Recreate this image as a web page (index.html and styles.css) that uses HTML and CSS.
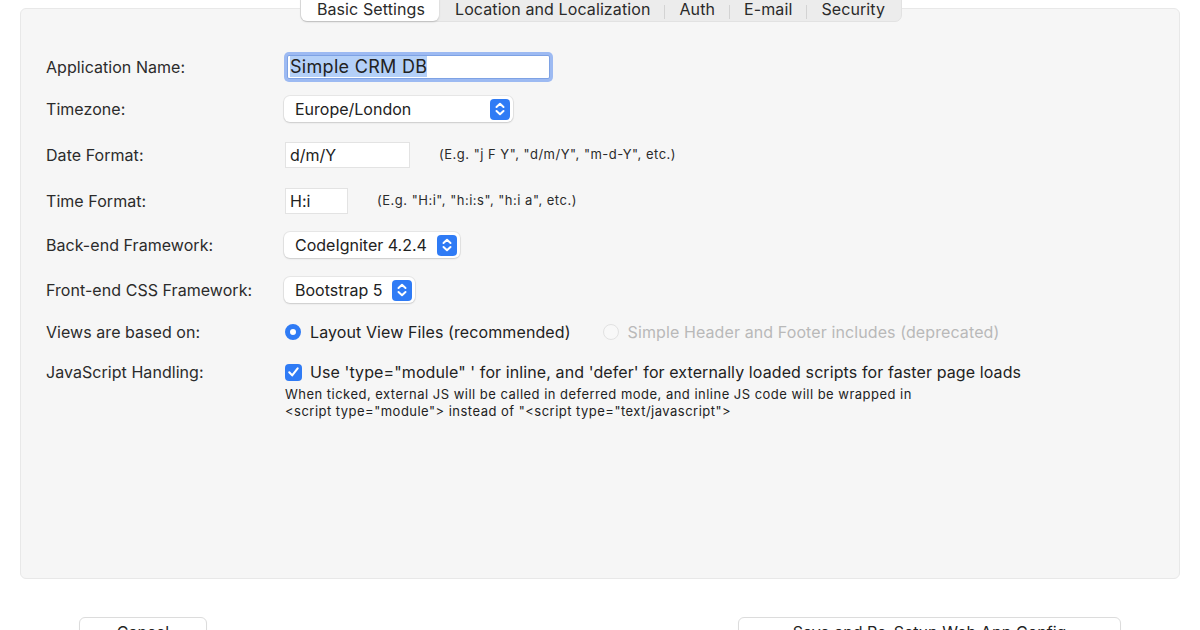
FILE: index.html
```html
<!DOCTYPE html>
<html>
<head>
<meta charset="utf-8">
<link rel="stylesheet" href="styles.css">
</head>
<body>
<div class="panel">
  <div class="tabs-wrap">
    <div class="tabs">
      <div class="tab active">Basic Settings</div>
      <div class="tab first">Location and Localization</div>
      <div class="sep"></div>
      <div class="tab">Auth</div>
      <div class="sep"></div>
      <div class="tab">E-mail</div>
      <div class="sep"></div>
      <div class="tab last">Security</div>
    </div>
  </div>
  <div class="form">
    <div class="row r1">
      <div class="label">Application Name:</div>
      <div class="ctrl"><div class="input focus w-name"><span class="sel">Simple CRM DB</span></div></div>
    </div>
    <div class="row r2">
      <div class="label">Timezone:</div>
      <div class="ctrl"><div class="select w-tz"><span class="val">Europe/London</span><span class="step"><svg viewBox="0 0 20 20" width="20" height="20"><path d="M6.5 8 L10 4.8 L13.5 8 M6.5 12 L10 15.2 L13.5 12" fill="none" stroke="#fff" stroke-width="2" stroke-linecap="round" stroke-linejoin="round"/></svg></span></div></div>
    </div>
    <div class="row r3">
      <div class="label">Date Format:</div>
      <div class="ctrl"><div class="input w-date">d/m/Y</div><span class="hint hint-date">(E.g. "j F Y", "d/m/Y", "m-d-Y", etc.)</span></div>
    </div>
    <div class="row r4">
      <div class="label">Time Format:</div>
      <div class="ctrl"><div class="input w-time">H:i</div><span class="hint hint-time">(E.g. "H:i", "h:i:s", "h:i a", etc.)</span></div>
    </div>
    <div class="row r5">
      <div class="label">Back-end Framework:</div>
      <div class="ctrl"><div class="select"><span class="val">CodeIgniter 4.2.4</span><span class="step"><svg viewBox="0 0 20 20" width="20" height="20"><path d="M6.5 8 L10 4.8 L13.5 8 M6.5 12 L10 15.2 L13.5 12" fill="none" stroke="#fff" stroke-width="2" stroke-linecap="round" stroke-linejoin="round"/></svg></span></div></div>
    </div>
    <div class="row r6">
      <div class="label">Front-end CSS Framework:</div>
      <div class="ctrl"><div class="select"><span class="val">Bootstrap 5</span><span class="step"><svg viewBox="0 0 20 20" width="20" height="20"><path d="M6.5 8 L10 4.8 L13.5 8 M6.5 12 L10 15.2 L13.5 12" fill="none" stroke="#fff" stroke-width="2" stroke-linecap="round" stroke-linejoin="round"/></svg></span></div></div>
    </div>
    <div class="row r7">
      <div class="label">Views are based on:</div>
      <div class="ctrl">
        <span class="radio on"></span><span class="opt">Layout View Files (recommended)</span>
        <span class="radio off"></span><span class="opt dis">Simple Header and Footer includes (deprecated)</span>
      </div>
    </div>
    <div class="row r8">
      <div class="label">JavaScript Handling:</div>
      <div class="ctrl col">
        <div class="chkline"><span class="check"><svg viewBox="0 0 18 18" width="18" height="18"><path d="M4.5 9.3 L7.6 12.6 L13.4 5.2" fill="none" stroke="#fff" stroke-width="2.2" stroke-linecap="round" stroke-linejoin="round"/></svg></span><span class="opt">Use 'type="module" ' for inline, and 'defer' for externally loaded scripts for faster page loads</span></div>
        <div class="desc">When ticked, external JS will be called in deferred mode, and inline JS code will be wrapped in<br>&lt;script type="module"&gt; instead of "&lt;script type="text/javascript"&gt;</div>
      </div>
    </div>
  </div>
</div>
<div class="footer">
  <div class="btn btn-cancel">Cancel</div>
  <div class="btn btn-save">Save and Re-Setup Web App Config</div>
</div>
</body>
</html>
```
FILE: styles.css
```css
html, body {
  margin: 0;
  padding: 0;
  overflow: hidden;
  background: #ffffff;
  font-family: Inter, "Liberation Sans", Arial, sans-serif;
  color: #262626;
}
.panel {
  margin: 8px 20px 0 20px;
  background: #f6f6f6;
  border: 1px solid #e8e8e8;
  border-radius: 6px;
  box-sizing: border-box;
  height: 571px;
}
.tabs-wrap {
  display: flex;
  justify-content: center;
  margin-top: -16px;
}
.tabs {
  display: flex;
  align-items: center;
  background: #ececec;
  border: 1px solid #e2e2e2;
  border-radius: 7px;
  height: 29px;
  box-sizing: border-box;
  padding: 0;
  margin-left: 2px;
}
.tab {
  font-size: 16px;
  letter-spacing: 0.1px;
  color: #2a2a2a;
  padding: 4px 14px 0 14px;
  height: 27px;
  box-sizing: border-box;
  line-height: 22px;
}
.tab.first { padding-left: 14px; }
.tab.last { padding-right: 16px; }
.tab.active {
  background: #ffffff;
  border-radius: 6px;
  box-shadow: 0 1px 2px rgba(0,0,0,0.18);
  padding: 4px 14px 0 16px;
  margin-right: 2px;
}
.sep {
  width: 1px;
  height: 14px;
  margin-top: 8px;
  background: #d3d3d3;
}
.form {
  display: flex;
  flex-direction: column;
  padding: 30px 0 0 25px;
}
.row {
  display: flex;
  align-items: center;
  height: 30px;
}
.r2 { margin-top: 12px; }
.r3 { margin-top: 16px; }
.r4 { margin-top: 16px; }
.r5 { margin-top: 14px; }
.r6 { margin-top: 15px; }
.r7 { margin-top: 12px; }
.r8 { margin-top: 10px; align-items: flex-start; height: auto; }
.label {
  width: 238px;
  flex: none;
  font-size: 16px;
  color: #2b2b2b;
  letter-spacing: 0.05px;
}
.r8 .label { padding-top: 5px; }
.ctrl {
  display: flex;
  align-items: center;
}
.ctrl.col {
  flex-direction: column;
  align-items: flex-start;
}
.input {
  background: #fff;
  border: 1px solid #e3e3e3;
  box-sizing: border-box;
  height: 26px;
  font-size: 16px;
  line-height: 24px;
  padding: 0 4px;
  color: #222;
  margin-left: 1px;
}
.input.focus {
  border: 1px solid #7ea2e4;
  box-shadow: 0 0 0 3px #9dbaf2;
  border-radius: 2px;
  height: 24px;
  margin-left: 3px;
  padding: 0 2px;
  line-height: 22px;
  font-size: 18px;
  letter-spacing: 0.3px;
}
.sel {
  background: #b4d0f8;
}
.w-name { width: 263px; }
.w-date { width: 125px; }
.w-time { width: 63px; }
.hint {
  font-size: 13px;
  color: #2b2b2b;
  margin-top: -2px;
  letter-spacing: 0.5px;
}
.hint-date { margin-left: 29px; }
.hint-time { margin-left: 29px; }
.select {
  display: flex;
  align-items: center;
  background: #fff;
  border-radius: 6px;
  box-shadow: 0 0 0 1px rgba(0,0,0,0.06), 0 1px 2px rgba(0,0,0,0.12);
  height: 26px;
  padding: 0 3px 0 11px;
  font-size: 16px;
  color: #222;
}
.select .val { margin-right: 10px; }
.w-tz { width: 215px; justify-content: space-between; }
.step {
  display: flex;
  align-items: center;
  justify-content: center;
  width: 20px;
  height: 21px;
  background: #2f7bf5;
  border-radius: 4px;
}
.radio {
  width: 16px;
  height: 16px;
  border-radius: 50%;
  box-sizing: border-box;
  flex: none;
}
.radio.on {
  border: 5px solid #2f7bf5;
  margin-left: 1px;
  background: #fff;
}
.radio.off {
  border: 1px solid #e2e2e2;
  background: #f8f8f8;
  margin-left: 32px;
}
.opt {
  font-size: 16px;
  color: #222;
  margin-left: 9px;
  letter-spacing: 0.1px;
}
.opt.dis {
  color: #b9b9b9;
}
.chkline {
  display: flex;
  align-items: center;
  height: 30px;
}
.check {
  display: flex;
  align-items: center;
  justify-content: center;
  width: 17px;
  height: 17px;
  background: #2f7bf5;
  border-radius: 4px;
  margin-left: 1px;
}
.chkline .opt { margin-left: 8px; }
.desc {
  font-size: 13px;
  line-height: 17px;
  color: #222;
  margin-top: -1px;
  margin-left: 1px;
  letter-spacing: 0.48px;
}
.footer {
  display: flex;
  justify-content: space-between;
  padding: 0 79px;
  margin-top: 38px;
}
.btn {
  background: #fff;
  border: 1px solid #dcdcdc;
  border-radius: 6px;
  box-shadow: 0 1px 1px rgba(0,0,0,0.06);
  height: 28px;
  box-sizing: border-box;
  font-size: 16px;
  color: #222;
  text-align: center;
  line-height: 24px;
  padding-top: 2px;
}
.btn-cancel { width: 128px; }
.btn-save { width: 383px; }
```
